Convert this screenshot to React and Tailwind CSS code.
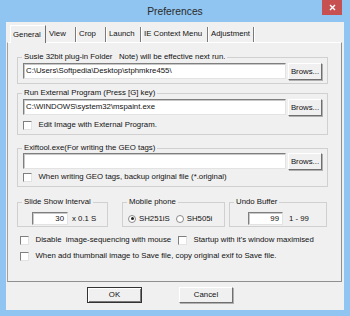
import React from "react";

const inputCls =
  "bg-white border border-t-[#7f7f7f] border-l-[#7f7f7f] border-r-[#e3e3e3] border-b-[#e3e3e3] shadow-[inset_1px_1px_0_#c8c8c8]";
const btnCls =
  "bg-[#f0f0f0] border border-t-white border-l-white border-r-[#6f6f6f] border-b-[#6f6f6f] shadow-[1px_1px_0_#b0b0b0] flex items-center justify-center";

function Group({ title, className, children }) {
  return (
    <fieldset className={"border border-[#d0d0d0] " + className}>
      <legend className="ml-[4px] px-[2px] leading-[10px] whitespace-pre">{title}</legend>
      {children}
    </fieldset>
  );
}

function Check({ label, className }) {
  return (
    <div className={"flex items-center h-[10px] " + className}>
      <span className="w-[9px] h-[9px] shrink-0 bg-white border border-t-[#7f7f7f] border-l-[#7f7f7f] border-r-[#e3e3e3] border-b-[#e3e3e3]" />
      <span className="whitespace-pre">{label}</span>
    </div>
  );
}

function Radio({ label, checked, className }) {
  return (
    <div className={"flex items-center " + className}>
      <span className="w-[8px] h-[8px] rounded-full bg-white border border-[#8a8a8a] flex items-center justify-center">
        {checked && <span className="w-[3px] h-[3px] rounded-full bg-[#222]" />}
      </span>
      <span className="ml-[3px]">{label}</span>
    </div>
  );
}

const tabs = [
  { name: "View", w: "w-[30px]" },
  { name: "Crop", w: "w-[30px]" },
  { name: "Launch", w: "w-[35px]" },
  { name: "IE Context Menu", w: "w-[67px]" },
  { name: "Adjustment", w: "w-[46px]" },
];

export default function App() {
  return (
    <div className="w-[350px] h-[316px] bg-[#90c5f1] flex flex-col font-['Liberation_Sans',Arial,sans-serif] text-[7.8px] text-[#111] overflow-hidden">
      {/* title bar */}
      <div className="relative h-[22px] flex items-center justify-center">
        <span className="text-[10.3px] text-[#2a2a2a] mt-[1px]">Preferences</span>
        <div className="absolute top-0 right-[8px] w-[20px] h-[15px] bg-[#c75050] flex items-center justify-center">
          <svg width="7" height="7" viewBox="0 0 7 7">
            <path d="M1 1 L6 6 M6 1 L1 6" stroke="#fff" strokeWidth="1.4" />
          </svg>
        </div>
      </div>

      {/* client */}
      <div className="mx-[6px] h-[288px] bg-[#f0f0f0] flex flex-col">
        <div className="h-[20px] flex items-end pl-[4px]">
          <div className="relative z-10 -mb-px w-[36px] h-[18px] bg-[#f0f0f0] border-t border-l border-r border-t-white border-l-white border-r-[#6f6f6f] pl-[2px] pt-[4px] leading-[10px]">
            General
          </div>
          {tabs.map((t) => (
            <div
              key={t.name}
              className={"h-[15px] border-r border-r-[#7a7a7a] shadow-[1px_0_0_#fff] pl-[3px] pt-[2px] leading-[10px] whitespace-nowrap " + t.w}
            >
              {t.name}
            </div>
          ))}
        </div>

        {/* tab panel */}
        <div className="ml-[1px] w-[335px] h-[240px] border border-t-white border-l-[#a0a0a0] border-r-[#8f8f8f] border-b-[#8f8f8f] flex flex-col">
          <Group
            title="Susie 32bit plug-in Folder   Note) will be effective next run."
            className="mt-[9px] ml-[9px] w-[311px] pb-[3px]"
          >
            <div className="flex items-start mt-[1px]">
              <div className={"ml-[5px] w-[263px] h-[16px] flex items-center pl-[2px] " + inputCls}>
                C:\Users\Softpedia\Desktop\stphmkre455\
              </div>
              <div className={"ml-[2px] w-[34px] h-[17px] " + btnCls}>Brows...</div>
            </div>
          </Group>

          <Group
            title="Run External Program (Press [G] key)"
            className="mt-[4px] ml-[9px] w-[311px] pb-[4px]"
          >
            <div className="flex items-start mt-[1px]">
              <div className={"ml-[5px] w-[263px] h-[16px] flex items-center pl-[2px] " + inputCls}>
                C:\WINDOWS\system32\mspaint.exe
              </div>
              <div className={"ml-[2px] w-[34px] h-[17px] " + btnCls}>Brows...</div>
            </div>
            <Check label="   Edit Image with External Program." className="mt-[4px] ml-[5px]" />
          </Group>

          <Group
            title="Exiftool.exe(For writing the GEO tags)"
            className="mt-[8px] ml-[9px] w-[311px] pb-[4px]"
          >
            <div className="flex items-start">
              <div className={"ml-[5px] w-[263px] h-[16px] " + inputCls} />
              <div className={"ml-[2px] w-[34px] h-[17px] " + btnCls}>Brows...</div>
            </div>
            <Check
              label="   When writing GEO tags, backup original file (*.original)"
              className="mt-[2px] ml-[5px]"
            />
          </Group>

          <div className="flex mt-[10px] ml-[9px]">
            <Group title="Slide Show Interval" className="w-[91px] pb-[1px]">
              <div className="flex items-center mt-[5px]">
                <div className={"ml-[14px] w-[36px] h-[13px] flex items-center justify-end pr-[3px] " + inputCls}>
                  30
                </div>
                <span className="ml-[4px]">x 0.1 S</span>
              </div>
            </Group>
            <Group title="Mobile phone" className="ml-[14px] w-[103px] pb-[1px]">
              <div className="flex items-center h-[13px] mt-[5px]">
                <Radio label="SH251iS" checked className="ml-[5px]" />
                <Radio label="SH505i" className="ml-[6px]" />
              </div>
            </Group>
            <Group title="Undo Buffer" className="ml-[4px] w-[98px] pb-[1px]">
              <div className="flex items-center mt-[5px]">
                <div className={"ml-[18px] w-[35px] h-[13px] flex items-center justify-end pr-[3px] " + inputCls}>
                  99
                </div>
                <span className="ml-[6px]">1 - 99</span>
              </div>
            </Group>
          </div>

          <div className="flex mt-[8px] ml-[12px]">
            <Check label="   Disable  image-sequencing with mouse" className="w-[158px]" />
            <Check label="   Startup with it's window maximised" />
          </div>
          <Check
            label="   When add thumbnail image to Save file, copy original exif to Save file."
            className="mt-[6px] ml-[12px]"
          />
        </div>

        {/* dialog buttons */}
        <div className="flex pt-[5px]">
          <div className="ml-[81px] w-[55px] h-[16px] bg-[#f0f0f0] border border-[#333] shadow-[inset_1px_1px_0_#fff,inset_-1px_-1px_0_#7a7a7a] flex items-center justify-center">
            OK
          </div>
          <div className={"ml-[37px] w-[54px] h-[16px] " + btnCls}>Cancel</div>
        </div>
      </div>
    </div>
  );
}
